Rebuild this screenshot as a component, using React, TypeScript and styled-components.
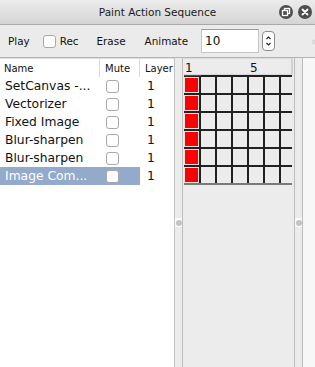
import React from "react";
import styled, { createGlobalStyle } from "styled-components";

const Global = createGlobalStyle`
  html, body { margin: 0; padding: 0; background: #ececec; }
  * { box-sizing: border-box; }
`;

const Window = styled.div`
  width: 315px;
  height: 367px;
  display: flex;
  flex-direction: column;
  overflow: hidden;
  font-family: "DejaVu Sans", "Liberation Sans", sans-serif;
  color: #111;
  background: #ececec;
`;

const TitleBar = styled.div`
  height: 25px;
  flex: none;
  display: flex;
  align-items: center;
  justify-content: center;
  position: relative;
  background: linear-gradient(#ececec, #d4d4d4);
  border-bottom: 1px solid #a9a9a9;
  font-size: 10.5px;
  color: #1a1a1a;
`;

const TitleButtons = styled.div`
  position: absolute;
  right: 3px;
  top: 5px;
  display: flex;
  gap: 5px;
`;

const RoundButton = styled.div`
  width: 14px;
  height: 14px;
  border-radius: 50%;
  background: #4e4e4e;
  display: flex;
  align-items: center;
  justify-content: center;
`;

const Toolbar = styled.div`
  height: 33px;
  flex: none;
  display: flex;
  align-items: center;
  padding-left: 8px;
  font-size: 10.4px;
  background: #ebebeb;
  border-bottom: 1px solid #b4b4b4;
`;

const ToolLabel = styled.span<{ $ml?: number }>`
  margin-left: ${(p) => p.$ml ?? 0}px;
`;

const Check = styled.span<{ $ml?: number }>`
  display: inline-block;
  width: 13px;
  height: 13px;
  margin-left: ${(p) => p.$ml ?? 0}px;
  border: 1px solid #a8a8a8;
  border-radius: 3px;
  background: #fff;
  flex: none;
`;

const NumberBox = styled.div`
  margin-left: 13px;
  width: 58px;
  height: 24px;
  background: #fff;
  border: 1px solid #c4c4c4;
  border-top-color: #9a9a9a;
  font-size: 12px;
  display: flex;
  align-items: center;
  padding-left: 3px;
`;

const Spinner = styled.div`
  margin-left: 3px;
  width: 13px;
  height: 20px;
  border: 1px solid #8c8c8c;
  border-radius: 4px;
  background: #fff;
  display: flex;
  align-items: center;
  justify-content: center;
`;

const Overflow = styled.span`
  margin-left: auto;
  margin-right: -1px;
  color: #c2c2c2;
  font-size: 11px;
  letter-spacing: -2px;
`;

const Main = styled.div`
  flex: 1;
  display: flex;
  min-height: 0;
`;

const ListPanel = styled.div`
  width: 175px;
  flex: none;
  background: #fff;
  border-right: 1px solid #c4c4c4;
`;

const HeaderRow = styled.div`
  display: grid;
  grid-template-columns: 99px 40px 1fr;
  height: 19px;
  border-top: 1px solid #dedede;
  font-size: 10px;
  align-items: center;
`;

const HeaderCell = styled.div<{ $divider?: boolean }>`
  height: 100%;
  display: flex;
  align-items: center;
  padding-left: ${(p) => (p.$divider ? 5 : 4)}px;
  border-left: ${(p) => (p.$divider ? "1px solid #d6d6d6" : "none")};
`;

const Row = styled.div`
  display: grid;
  grid-template-columns: 99px 41px 1fr;
  height: 18px;
  font-size: 12.3px;
  align-items: center;
`;

const NameCell = styled.div<{ $selected?: boolean }>`
  height: 100%;
  display: flex;
  align-items: center;
  padding-left: 5px;
  white-space: nowrap;
  overflow: hidden;
  background: ${(p) => (p.$selected ? "#94aacb" : "transparent")};
  color: ${(p) => (p.$selected ? "#fff" : "#111")};
`;

const MuteCell = styled.div<{ $selected?: boolean }>`
  height: 100%;
  display: flex;
  align-items: center;
  padding-left: 7px;
  background: ${(p) => (p.$selected ? "#94aacb" : "transparent")};
`;

const LayerCell = styled.div`
  padding-left: 7px;
`;

const Splitter = styled.div`
  width: 8px;
  flex: none;
  background: #ebebeb;
  border-right: 1px solid #bcbcbc;
  display: flex;
  flex-direction: column;
  align-items: center;
`;

const Knob = styled.div`
  margin-top: 160px;
  width: 7px;
  height: 9px;
  background: #fafafa;
  display: flex;
  align-items: center;
  justify-content: center;
  &::after {
    content: "";
    width: 6px;
    height: 6px;
    border-radius: 50%;
    background: #c4c4c4;
  }
`;

const GridPanel = styled.div`
  width: 112px;
  flex: none;
  background: #ececec;
  padding-left: 1px;
  border-right: 1px solid #bcbcbc;
`;

const GridHeader = styled.div`
  width: 109px;
  height: 17px;
  border-right: 2px solid #d2d2d2;
  border-bottom: 1px solid #d6d6d6;
  border-top: 1px solid #dcdcdc;
  font-size: 12px;
  position: relative;
`;

const FrameNum = styled.span<{ $x: number; $mark?: boolean }>`
  position: absolute;
  left: ${(p) => p.$x}px;
  bottom: -1px;
  line-height: 14px;
  ${(p) =>
    p.$mark
      ? `&::after { content: ""; position: absolute; left: -1px; top: 14px; width: 17px; height: 1px; background: #555; }`
      : ""}
`;

const CellGrid = styled.div`
  width: 108px;
  display: grid;
  grid-template-columns: 15px repeat(5, 14px) 11px;
  grid-auto-rows: 16px;
  column-gap: 2px;
  row-gap: 2px;
  padding-top: 2px;
  background: #222;
  border-bottom: 2px solid #7a7a7a;
`;

const Cell = styled.div<{ $on?: boolean }>`
  background: ${(p) => (p.$on ? "#ff0000" : "#ececec")};
  box-shadow: ${(p) => (p.$on ? "inset 0 0 0 1px #e4e4e4" : "none")};
`;

const RightStrip = styled.div`
  flex: 1;
  background: #f7f7f7;
`;

const rows = [
  "SetCanvas -...",
  "Vectorizer",
  "Fixed Image",
  "Blur-sharpen",
  "Blur-sharpen",
  "Image Com...",
];

export default function App() {
  return (
    <>
      <Global />
      <Window>
        <TitleBar>
          Paint Action Sequence
          <TitleButtons>
            <RoundButton>
              <svg width="10" height="10" viewBox="0 0 10 10">
                <rect x="3.5" y="1.5" width="5" height="5" fill="none" stroke="#fff" strokeWidth="1.3" />
                <rect x="1.5" y="3.5" width="5" height="5" fill="#4e4e4e" stroke="#fff" strokeWidth="1.3" />
              </svg>
            </RoundButton>
            <RoundButton>
              <svg width="10" height="10" viewBox="0 0 10 10">
                <path d="M2.5 2.5 L7.5 7.5 M7.5 2.5 L2.5 7.5" stroke="#fff" strokeWidth="1.8" strokeLinecap="round" />
              </svg>
            </RoundButton>
          </TitleButtons>
        </TitleBar>
        <Toolbar>
          <ToolLabel>Play</ToolLabel>
          <Check $ml={13} />
          <ToolLabel $ml={4}>Rec</ToolLabel>
          <ToolLabel $ml={18}>Erase</ToolLabel>
          <ToolLabel $ml={19}>Animate</ToolLabel>
          <NumberBox>10</NumberBox>
          <Spinner>
            <svg width="7" height="14" viewBox="0 0 7 14">
              <path d="M1.5 5 L3.5 3 L5.5 5 M1.5 9 L3.5 11 L5.5 9" fill="none" stroke="#222" strokeWidth="1.1" />
            </svg>
          </Spinner>
          <Overflow>»</Overflow>
        </Toolbar>
        <Main>
          <ListPanel>
            <HeaderRow>
              <HeaderCell>Name</HeaderCell>
              <HeaderCell $divider>Mute</HeaderCell>
              <HeaderCell $divider>Layer</HeaderCell>
            </HeaderRow>
            {rows.map((name, i) => {
              const sel = i === rows.length - 1;
              return (
                <Row key={i}>
                  <NameCell $selected={sel}>{name}</NameCell>
                  <MuteCell $selected={sel}>
                    <Check />
                  </MuteCell>
                  <LayerCell>1</LayerCell>
                </Row>
              );
            })}
          </ListPanel>
          <Splitter>
            <Knob />
          </Splitter>
          <GridPanel>
            <GridHeader>
              <FrameNum $x={1} $mark>1</FrameNum>
              <FrameNum $x={66}>5</FrameNum>
            </GridHeader>
            <CellGrid>
              {Array.from({ length: 6 * 7 }).map((_, i) => (
                <Cell key={i} $on={i % 7 === 0} />
              ))}
            </CellGrid>
          </GridPanel>
          <Splitter>
            <Knob />
          </Splitter>
          <RightStrip />
        </Main>
      </Window>
    </>
  );
}
